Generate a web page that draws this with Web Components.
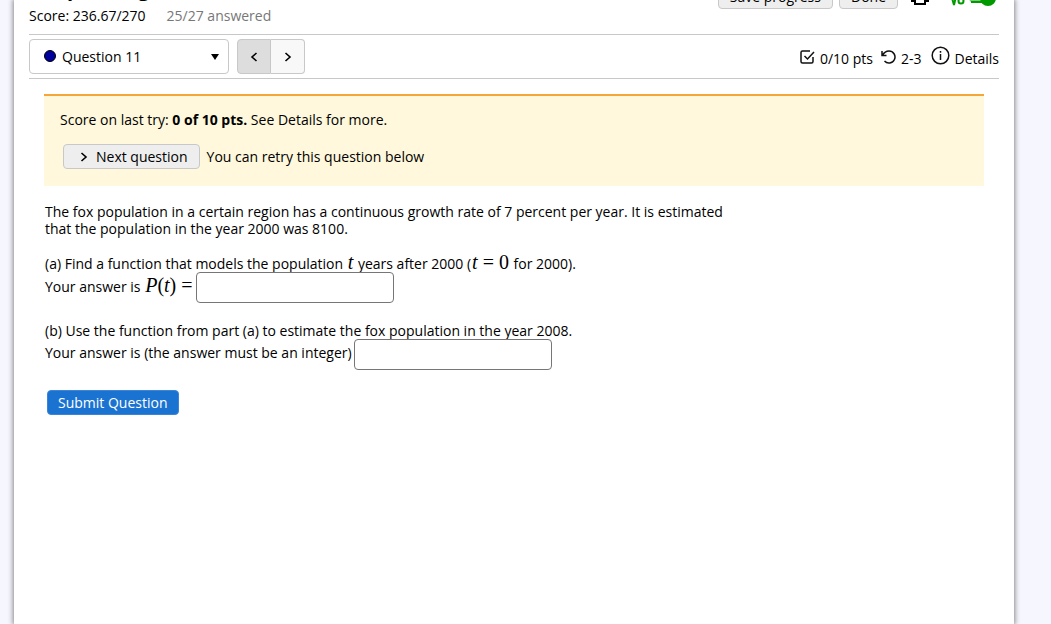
<!DOCTYPE html>
<html lang="en">
<head>
<meta charset="utf-8">
<title>Question 11</title>
<style>
html{background:#f5f6fe}
body{margin:0;height:100vh;overflow:hidden;font:14px/17px "Open Sans",sans-serif;color:#000}
</style>
</head>
<body>
<assessment-page></assessment-page>
<script>
const define = (name, html) => {
  const t = document.createElement('template');
  t.innerHTML = html;
  customElements.define(name, class extends HTMLElement {
    constructor() {
      super();
      this.attachShadow({mode: 'open'}).append(t.content.cloneNode(true));
    }
  });
};

define('math-text', `<style>
:host{font:italic 20px/17px "Liberation Serif",serif;white-space:nowrap;padding:0 1px}
</style><slot></slot>`);

define('plain-button', `<style>
:host{display:block}
button{display:flex;align-items:center;gap:8px;box-sizing:border-box;height:25px;margin:0;padding:0 11px;font:inherit;color:inherit;background:#eee;border:1px solid #c8c8c8;border-radius:4px;white-space:nowrap}
</style><button type="button"><slot></slot></button>`);

define('page-header', `<style>
:host{display:flex;justify-content:space-between;margin-top:-16px;padding-bottom:10px;border-bottom:1px solid #c8c8c8}
h1{margin:-7px 0 6px;font-size:20px;line-height:24px;font-weight:700}
p{margin:0;display:flex;gap:21px}
.done{color:#777}
.tools{display:flex;align-items:flex-start;gap:6px}
svg{display:block}
.print{margin-left:7px}
.toggle{margin-left:14px}
</style>
<div><h1>Chapter Log</h1><p><span>Score: 236.67/270</span><span class="done">25/27 answered</span></p></div>
<div class="tools">
<plain-button>Save progress</plain-button>
<plain-button>Done</plain-button>
<svg class="print" width="18" height="22" viewBox="0 0 18 22" fill="none" stroke="#000" stroke-width="2"><path d="M4 10V4h10v6M4 17H1v-7h16v7h-3M4 14h10v6H4z"/></svg>
<svg class="toggle" width="50" height="24" viewBox="0 0 50 24" fill="none" stroke="#090" stroke-width="2"><path d="M1 15l2-1 2 7 3-13h6"/><circle cx="12" cy="17" r="2.500"/><rect x="20" y="9" width="24" height="10" rx="5" fill="#7c7" stroke="none"/><path d="M22 18h12"/><circle cx="39" cy="14" r="8" fill="#090" stroke="none"/></svg>
</div>`);

define('question-picker', `<style>
:host{display:block;position:relative;width:200px}
select{appearance:none;display:block;box-sizing:border-box;width:100%;height:35px;margin:0;padding:0 32px;font:inherit;color:inherit;background:#fff;border:1px solid #c8c8c8;border-radius:4px}
svg{position:absolute;pointer-events:none}
.dot{left:14px;top:10px}
.arrow{right:9px;top:15px}
</style>
<select aria-label="Question"><option>Question 11</option></select>
<svg class="dot" width="14" height="14"><circle cx="7" cy="7" r="5.500" fill="#00009c" stroke="#000"/></svg>
<svg class="arrow" width="10" height="6"><path d="M1 0h8L5 6z"/></svg>`);

define('step-buttons', `<style>
:host{display:flex}
button{box-sizing:border-box;width:34px;height:35px;padding:0;display:grid;place-items:center;border:1px solid #c8c8c8;background:#f8f8f8}
.prev{background:#ddd;border-radius:4px 0 0 4px}
.next{border-left:0;border-radius:0 4px 4px 0}
svg{fill:none;stroke:#000;stroke-width:1.600}
</style>
<button type="button" class="prev" aria-label="Previous question"><svg width="8" height="10"><path d="M6.500 1L2 5l4.500 4"/></svg></button>
<button type="button" class="next" aria-label="Next question"><svg width="8" height="10"><path d="M1.500 1L6 5 1.500 9"/></svg></button>`);

define('question-status', `<style>
:host{display:flex;align-items:center;gap:5px}
svg{display:block;fill:none;stroke:#111;stroke-width:1.500}
.retry{margin-left:3px}
a{display:flex;align-items:center;gap:4px;margin-left:5px;color:inherit;text-decoration:none}
span{padding-top:4px}
</style>
<svg width="15" height="14" viewBox="0 0 15 14"><path d="M10 1H2.500Q1 1 1 2.500v9Q1 13 2.500 13h9q1.500 0 1.500-1.500V7M4.500 6l3 3L14 2"/></svg><span>0/10 pts</span>
<svg class="retry" width="15" height="14" viewBox="0 0 15 14"><path d="M1 1v4.500h4.500M1.500 5.200C3 2.500 5 1 8 1a6 6 0 1 1-4.500 10"/></svg><span>2-3</span>
<a href="#details"><svg width="19" height="22" viewBox="0 0 19 22"><circle cx="9.500" cy="9.500" r="8.300"/><path d="M9.500 8v6M9.500 5v1.800"/></svg><span>Details</span></a>`);

define('question-nav', `<style>
:host{display:flex;align-items:center;gap:8px;padding:4px 0;border-bottom:1px solid #c8c8c8}
question-status{margin-left:auto}
</style><question-picker></question-picker><step-buttons></step-buttons><question-status></question-status>`);

define('score-notice', `<style>
:host{display:block;margin:15px 15px 0;padding:15px 16px 17px;border-top:2px solid #f5a638;background:#fff8dc}
p{margin:0}
.row{display:flex;align-items:center;gap:7px;margin:16px 3px 0}
svg{fill:none;stroke:#000;stroke-width:1.600;margin-left:5px}
</style>
<p>Score on last try: <b>0 of 10 pts.</b> See Details for more.</p>
<div class="row"><plain-button><svg width="8" height="10"><path d="M1.500 1L6 5 1.500 9"/></svg>Next question</plain-button><span>You can retry this question below</span></div>`);

define('answer-row', `<style>
:host{display:block}
label{display:flex;gap:2px}
input{box-sizing:border-box;width:198px;height:31px;margin:0;padding:4px 6px;font:inherit;background:#fff;border:1px solid #767676;border-radius:4px}
span{padding-top:5px}
</style><label><span><slot></slot></span><input type="text"></label>`);

define('question-body', `<style>
:host{display:block;max-width:700px;margin:17px 16px 0}
p{margin:0}
i{font-style:normal}
.gap{margin-top:17px}
.part{margin-top:19px}
button{height:25px;margin:20px 2px;padding:0 10px;border:1px solid #3c84d8;border-radius:4px;background:#1a73d1;color:#fff;font:inherit;font-weight:500}
</style>
<p>The fox population in a certain region has a continuous growth rate of 7 percent per year. It is estimated that the population in the year 2000 was 8100.</p>
<p class="gap">(a) Find a function that models the population <math-text>t</math-text> years after 2000 (<math-text>t <i>= 0</i></math-text> for 2000).</p>
<answer-row>Your answer is <math-text>P<i>(</i>t<i>) =</i></math-text></answer-row>
<p class="part">(b) Use the function from part (a) to estimate the fox population in the year 2008.</p>
<answer-row>Your answer is (the answer must be an integer)</answer-row>
<button type="submit">Submit Question</button>`);

define('assessment-page', `<style>
:host{display:flow-root;box-sizing:border-box;min-height:100vh;margin:0 37px 0 14px;padding:0 15px;background:#fff;box-shadow:0 0 5px 1px #888}
</style><page-header></page-header><question-nav></question-nav><score-notice></score-notice><question-body></question-body>`);
</script>
</body>
</html>
